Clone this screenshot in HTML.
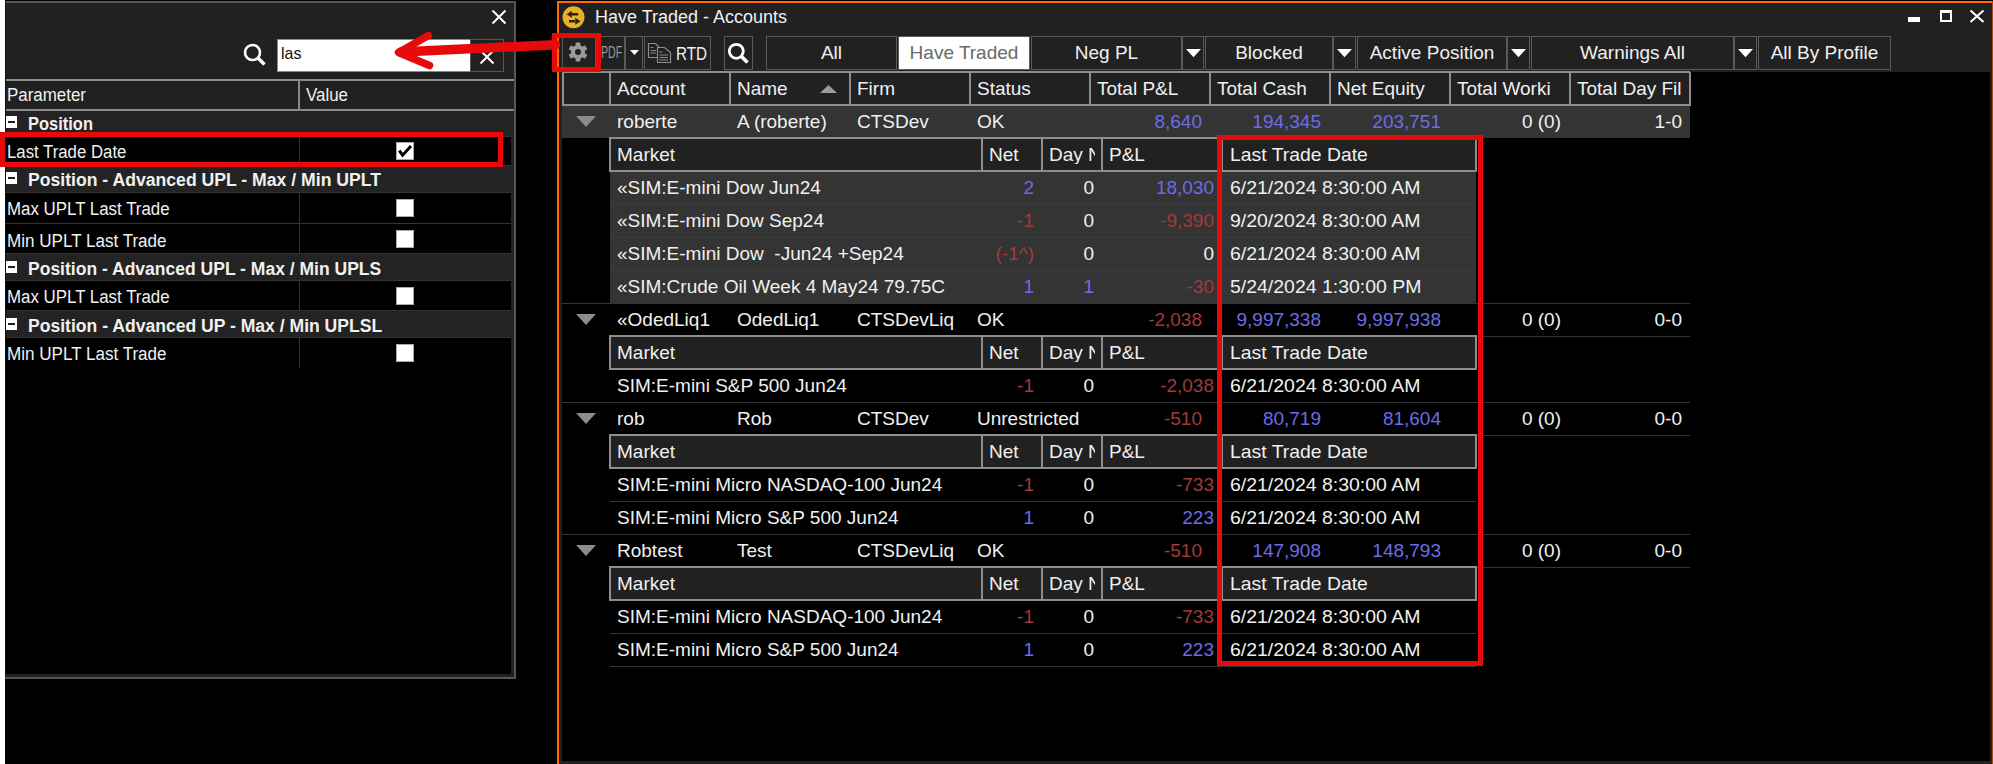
<!DOCTYPE html>
<html><head><meta charset="utf-8"><style>
html,body{margin:0;padding:0;width:1993px;height:764px;overflow:hidden;background:#000}
body{position:relative;font-family:"Liberation Sans",sans-serif}
.t{position:absolute;white-space:pre;line-height:1}
.r{position:absolute}
</style></head><body>
<div class="r" style="left:0px;top:0px;width:5px;height:764px;background:#ffffff"></div>
<div class="r" style="left:5px;top:0px;width:511px;height:679px;background:#212121"></div>
<div class="r" style="left:5px;top:0px;width:511px;height:1px;background:#000"></div>
<div class="r" style="left:6px;top:1px;width:510px;height:2px;background:#555"></div>
<div class="r" style="left:5px;top:0px;width:1px;height:679px;background:#111"></div>
<div class="r" style="left:514px;top:1px;width:2px;height:678px;background:#555"></div>
<div class="r" style="left:5px;top:677px;width:511px;height:2px;background:#555"></div>
<svg class="r" style="left:490px;top:8px" width="18" height="18" viewBox="0 0 18 18"><path d="M2.5 2.5 L15.5 15.5 M15.5 2.5 L2.5 15.5" stroke="#fff" stroke-width="2"/></svg>
<svg class="r" style="left:242px;top:42px" width="26" height="26" viewBox="0 0 26 26"><circle cx="10.5" cy="10.5" r="7.5" fill="none" stroke="#fff" stroke-width="2.6"/><path d="M16 16 L22.5 22.5" stroke="#fff" stroke-width="3.4" stroke-linecap="butt"/></svg>
<div class="r" style="left:277px;top:39px;width:194px;height:33px;background:#fff;border:1px solid #8a8a8a;box-sizing:border-box"></div>
<div class="t" style="left:281px;top:44.61px;font-size:17px;color:#111;font-weight:400;transform:scaleX(0.94);transform-origin:0 0;">las</div>
<div class="r" style="left:470px;top:39px;width:34px;height:33px;background:#212121;border:1px solid #555;box-sizing:border-box"></div>
<svg class="r" style="left:478px;top:48px" width="18" height="18" viewBox="0 0 18 18"><path d="M2.5 2.5 L15.5 15.5 M15.5 2.5 L2.5 15.5" stroke="#fff" stroke-width="2"/></svg>
<div class="r" style="left:6px;top:79px;width:508px;height:2px;background:#8a8a8a"></div>
<div class="r" style="left:6px;top:109px;width:508px;height:2px;background:#8a8a8a"></div>
<div class="r" style="left:298px;top:81px;width:2px;height:28px;background:#8a8a8a"></div>
<div class="t" style="left:6.5px;top:86.16px;font-size:18px;color:#f0f0f0;font-weight:400;transform:scaleX(0.94);transform-origin:0 0;">Parameter</div>
<div class="t" style="left:306px;top:86.16px;font-size:18px;color:#f0f0f0;font-weight:400;transform:scaleX(0.94);transform-origin:0 0;">Value</div>
<div class="r" style="left:6px;top:111px;width:508px;height:566px;background:#000"></div>
<div class="r" style="left:511px;top:111px;width:3px;height:566px;background:#212121"></div>
<div class="r" style="left:6px;top:674px;width:508px;height:3px;background:#212121"></div>
<div class="r" style="left:6px;top:111px;width:505px;height:26px;background:#232323"></div>
<div class="r" style="left:6px;top:136px;width:505px;height:1px;background:#333333"></div>
<div class="r" style="left:6px;top:115.9px;width:11px;height:12px;background:#fff"></div>
<div class="r" style="left:8px;top:120.9px;width:7px;height:2px;background:#222"></div>
<div class="t" style="left:27.5px;top:114.66px;font-size:18px;color:#f0f0f0;font-weight:700;transform:scaleX(0.9155);transform-origin:0 0;">Position</div>
<div class="r" style="left:6px;top:165px;width:505px;height:1px;background:#333333"></div>
<div class="r" style="left:299px;top:137px;width:1px;height:28px;background:#333333"></div>
<div class="t" style="left:6.5px;top:143.26px;font-size:18px;color:#f0f0f0;font-weight:400;transform:scaleX(0.9322);transform-origin:0 0;">Last Trade Date</div>
<div class="r" style="left:396px;top:142px;width:18px;height:18px;background:#fff;border:1px solid #aaa;box-sizing:border-box"></div>
<svg class="r" style="left:396px;top:142px" width="18" height="18" viewBox="0 0 18 18"><path d="M3.2 8.6 L6.6 13.2 L15 4" fill="none" stroke="#000" stroke-width="3"/></svg>
<div class="r" style="left:6px;top:166px;width:505px;height:27px;background:#232323"></div>
<div class="r" style="left:6px;top:192px;width:505px;height:1px;background:#333333"></div>
<div class="r" style="left:6px;top:172px;width:11px;height:12px;background:#fff"></div>
<div class="r" style="left:8px;top:177px;width:7px;height:2px;background:#222"></div>
<div class="t" style="left:27.5px;top:170.76px;font-size:18px;color:#f0f0f0;font-weight:700;transform:scaleX(0.9786);transform-origin:0 0;">Position - Advanced UPL - Max / Min UPLT</div>
<div class="r" style="left:6px;top:223px;width:505px;height:1px;background:#333333"></div>
<div class="r" style="left:299px;top:193px;width:1px;height:30px;background:#333333"></div>
<div class="t" style="left:6.5px;top:200.26px;font-size:18px;color:#f0f0f0;font-weight:400;transform:scaleX(0.9376);transform-origin:0 0;">Max UPLT Last Trade</div>
<div class="r" style="left:396px;top:199px;width:18px;height:18px;background:#fff;border:1px solid #aaa;box-sizing:border-box"></div>
<div class="r" style="left:6px;top:253px;width:505px;height:1px;background:#333333"></div>
<div class="r" style="left:299px;top:224px;width:1px;height:29px;background:#333333"></div>
<div class="t" style="left:6.5px;top:231.76px;font-size:18px;color:#f0f0f0;font-weight:400;transform:scaleX(0.9476);transform-origin:0 0;">Min UPLT Last Trade</div>
<div class="r" style="left:396px;top:230px;width:18px;height:18px;background:#fff;border:1px solid #aaa;box-sizing:border-box"></div>
<div class="r" style="left:6px;top:254px;width:505px;height:27px;background:#232323"></div>
<div class="r" style="left:6px;top:280px;width:505px;height:1px;background:#333333"></div>
<div class="r" style="left:6px;top:261px;width:11px;height:12px;background:#fff"></div>
<div class="r" style="left:8px;top:266px;width:7px;height:2px;background:#222"></div>
<div class="t" style="left:27.5px;top:259.76px;font-size:18px;color:#f0f0f0;font-weight:700;transform:scaleX(0.9729);transform-origin:0 0;">Position - Advanced UPL - Max / Min UPLS</div>
<div class="r" style="left:6px;top:310px;width:505px;height:1px;background:#333333"></div>
<div class="r" style="left:299px;top:281px;width:1px;height:29px;background:#333333"></div>
<div class="t" style="left:6.5px;top:288.26px;font-size:18px;color:#f0f0f0;font-weight:400;transform:scaleX(0.9376);transform-origin:0 0;">Max UPLT Last Trade</div>
<div class="r" style="left:396px;top:287px;width:18px;height:18px;background:#fff;border:1px solid #aaa;box-sizing:border-box"></div>
<div class="r" style="left:6px;top:311px;width:505px;height:27px;background:#232323"></div>
<div class="r" style="left:6px;top:337px;width:505px;height:1px;background:#333333"></div>
<div class="r" style="left:6px;top:318px;width:11px;height:12px;background:#fff"></div>
<div class="r" style="left:8px;top:323px;width:7px;height:2px;background:#222"></div>
<div class="t" style="left:27.5px;top:316.76px;font-size:18px;color:#f0f0f0;font-weight:700;transform:scaleX(0.9756);transform-origin:0 0;">Position - Advanced UP - Max / Min UPLSL</div>
<div class="r" style="left:299px;top:338px;width:1px;height:30px;background:#333333"></div>
<div class="t" style="left:6.5px;top:345.46px;font-size:18px;color:#f0f0f0;font-weight:400;transform:scaleX(0.9476);transform-origin:0 0;">Min UPLT Last Trade</div>
<div class="r" style="left:396px;top:344px;width:18px;height:18px;background:#fff;border:1px solid #aaa;box-sizing:border-box"></div>
<div class="r" style="left:557px;top:1px;width:1436px;height:763px;background:#212121"></div>
<div class="r" style="left:557px;top:1px;width:1436px;height:2px;background:#ff6a00"></div>
<div class="r" style="left:557px;top:1px;width:2px;height:763px;background:#ff6a00"></div>
<div class="r" style="left:1992px;top:1px;width:1px;height:763px;background:#a84a10"></div>
<div class="r" style="left:562px;top:72px;width:1428px;height:689px;background:#000"></div>
<svg class="r" style="left:562px;top:6px" width="23" height="23" viewBox="0 0 23 23"><circle cx="11.5" cy="11.3" r="11" fill="#e9b12b"/><path d="M4.6 8.3 L9.8 4.8 L9.8 11.8 Z M9.5 7 H16.2 V9.6 H9.5 Z" fill="#2b2412"/><path d="M18.6 15.2 L13.2 11.7 L13.2 18.7 Z M7 13.9 H13.5 V16.5 H7 Z" fill="#2b2412"/></svg>
<div class="t" style="left:595px;top:8.26px;font-size:18px;color:#f0f0f0;font-weight:400;">Have Traded - Accounts</div>
<div class="r" style="left:1908px;top:17px;width:12px;height:5px;background:#fff"></div>
<div class="r" style="left:1940px;top:10px;width:12px;height:12px;border:2px solid #fff;border-top-width:3px;box-sizing:border-box"></div>
<svg class="r" style="left:1968px;top:8px" width="18" height="16" viewBox="0 0 18 16"><path d="M2.5 2.5 L15.5 14 M15.5 2.5 L2.5 14" stroke="#fff" stroke-width="2"/></svg>
<div class="r" style="left:562px;top:36px;width:34px;height:34px;border:1px solid #5a5a5a;box-sizing:border-box;background:#212121"></div>
<svg class="r" style="left:567px;top:41px" width="22" height="22" viewBox="0 0 22 22"><g fill="#9a9a9a"><circle cx="11" cy="11" r="7"/><rect x="8.6" y="1.5" width="4.8" height="5" rx="1" transform="rotate(0 11 11)"/><rect x="8.6" y="1.5" width="4.8" height="5" rx="1" transform="rotate(60 11 11)"/><rect x="8.6" y="1.5" width="4.8" height="5" rx="1" transform="rotate(120 11 11)"/><rect x="8.6" y="1.5" width="4.8" height="5" rx="1" transform="rotate(180 11 11)"/><rect x="8.6" y="1.5" width="4.8" height="5" rx="1" transform="rotate(240 11 11)"/><rect x="8.6" y="1.5" width="4.8" height="5" rx="1" transform="rotate(300 11 11)"/></g><circle cx="11" cy="11" r="3" fill="#212121"/></svg>
<div class="r" style="left:596px;top:36px;width:29px;height:34px;border:1px solid #5a5a5a;box-sizing:border-box;background:#212121"></div>
<div class="t" style="left:601px;top:45px;font-size:16px;line-height:16px;color:#9a9a9a;transform:scaleX(0.66);transform-origin:0 0;letter-spacing:0px">PDF</div>
<div class="r" style="left:625px;top:36px;width:18px;height:34px;border:1px solid #5a5a5a;box-sizing:border-box;background:#212121"></div>
<svg class="r" style="left:630px;top:50px" width="9" height="6" viewBox="0 0 9 6"><path d="M0 0 H9 L4.5 5 Z" fill="#fff"/></svg>
<div class="r" style="left:644px;top:36px;width:67px;height:34px;border:1px solid #5a5a5a;box-sizing:border-box;background:#212121"></div>
<svg class="r" style="left:647px;top:42px" width="26" height="22" viewBox="0 0 26 22"><g fill="none" stroke="#8c8c8c" stroke-width="1.2"><path d="M1.5 1.5 H8.5 L11.5 4.5 V15.5 H1.5 Z"/><path d="M10.5 5.5 H17.5 L23.5 10.5 V20.5 H10.5 Z" fill="#212121"/><path d="M3.5 5.5 H6.5 M3.5 8.5 H9 M3.5 11 H9 M12.5 10 H15.5 M12.5 13 H21 M12.5 15.5 H21 M12.5 18 H21"/></g></svg>
<div class="t" style="left:676px;top:44px;font-size:19px;line-height:19px;color:#f0f0f0;transform:scaleX(0.8);transform-origin:0 0">RTD</div>
<div class="r" style="left:724px;top:36px;width:29px;height:34px;border:1px solid #5a5a5a;box-sizing:border-box;background:#212121"></div>
<svg class="r" style="left:726px;top:41px" width="26" height="26" viewBox="0 0 26 26"><circle cx="10.3" cy="10.3" r="7" fill="none" stroke="#fff" stroke-width="2.8"/><path d="M15.5 15.5 L21.5 21.5" stroke="#fff" stroke-width="3.6"/></svg>
<div class="r" style="left:766px;top:36px;width:131px;height:34px;border:1px solid #5a5a5a;box-sizing:border-box;background:#212121"></div>
<div class="t" style="left:531.5px;width:600px;text-align:center;top:43.42px;font-size:19px;color:#f0f0f0;font-weight:400;">All</div>
<div class="r" style="left:898px;top:36px;width:132px;height:34px;background:#fff;border:1px solid #5a5a5a;box-sizing:border-box"></div>
<div class="t" style="left:664.0px;width:600px;text-align:center;top:43.42px;font-size:19px;color:#6a6a6a;font-weight:400;">Have Traded</div>
<div class="r" style="left:1031px;top:36px;width:151px;height:34px;border:1px solid #5a5a5a;box-sizing:border-box;background:#212121"></div>
<div class="t" style="left:806.5px;width:600px;text-align:center;top:43.42px;font-size:19px;color:#f0f0f0;font-weight:400;">Neg PL</div>
<div class="r" style="left:1182px;top:36px;width:22px;height:34px;border:1px solid #5a5a5a;box-sizing:border-box;background:#212121"></div>
<svg class="r" style="left:1185.5px;top:48.8px" width="15" height="9" viewBox="0 0 15 9"><path d="M0 0 H15 L7.5 8.3 Z" fill="#fff"/></svg>
<div class="r" style="left:1205px;top:36px;width:128px;height:34px;border:1px solid #5a5a5a;box-sizing:border-box;background:#212121"></div>
<div class="t" style="left:969.0px;width:600px;text-align:center;top:43.42px;font-size:19px;color:#f0f0f0;font-weight:400;">Blocked</div>
<div class="r" style="left:1333px;top:36px;width:23px;height:34px;border:1px solid #5a5a5a;box-sizing:border-box;background:#212121"></div>
<svg class="r" style="left:1337.0px;top:48.8px" width="15" height="9" viewBox="0 0 15 9"><path d="M0 0 H15 L7.5 8.3 Z" fill="#fff"/></svg>
<div class="r" style="left:1357px;top:36px;width:150px;height:34px;border:1px solid #5a5a5a;box-sizing:border-box;background:#212121"></div>
<div class="t" style="left:1132.0px;width:600px;text-align:center;top:43.42px;font-size:19px;color:#f0f0f0;font-weight:400;">Active Position</div>
<div class="r" style="left:1507px;top:36px;width:23px;height:34px;border:1px solid #5a5a5a;box-sizing:border-box;background:#212121"></div>
<svg class="r" style="left:1511.0px;top:48.8px" width="15" height="9" viewBox="0 0 15 9"><path d="M0 0 H15 L7.5 8.3 Z" fill="#fff"/></svg>
<div class="r" style="left:1531px;top:36px;width:203px;height:34px;border:1px solid #5a5a5a;box-sizing:border-box;background:#212121"></div>
<div class="t" style="left:1332.5px;width:600px;text-align:center;top:43.42px;font-size:19px;color:#f0f0f0;font-weight:400;">Warnings All</div>
<div class="r" style="left:1734px;top:36px;width:23px;height:34px;border:1px solid #5a5a5a;box-sizing:border-box;background:#212121"></div>
<svg class="r" style="left:1738.0px;top:48.8px" width="15" height="9" viewBox="0 0 15 9"><path d="M0 0 H15 L7.5 8.3 Z" fill="#fff"/></svg>
<div class="r" style="left:1758px;top:36px;width:133px;height:34px;border:1px solid #5a5a5a;box-sizing:border-box;background:#212121"></div>
<div class="t" style="left:1524.5px;width:600px;text-align:center;top:43.42px;font-size:19px;color:#f0f0f0;font-weight:400;">All By Profile</div>
<div class="r" style="left:562px;top:72px;width:1128px;height:33px;background:#212121"></div>
<div class="r" style="left:562px;top:71px;width:1128px;height:2px;background:#8e8e8e"></div>
<div class="r" style="left:562px;top:104px;width:1128px;height:2px;background:#8e8e8e"></div>
<div class="r" style="left:562px;top:72px;width:2px;height:34px;background:#8e8e8e"></div>
<div class="r" style="left:609px;top:72px;width:2px;height:34px;background:#8e8e8e"></div>
<div class="r" style="left:729px;top:72px;width:2px;height:34px;background:#8e8e8e"></div>
<div class="r" style="left:849px;top:72px;width:2px;height:34px;background:#8e8e8e"></div>
<div class="r" style="left:969px;top:72px;width:2px;height:34px;background:#8e8e8e"></div>
<div class="r" style="left:1089px;top:72px;width:2px;height:34px;background:#8e8e8e"></div>
<div class="r" style="left:1209px;top:72px;width:2px;height:34px;background:#8e8e8e"></div>
<div class="r" style="left:1329px;top:72px;width:2px;height:34px;background:#8e8e8e"></div>
<div class="r" style="left:1449px;top:72px;width:2px;height:34px;background:#8e8e8e"></div>
<div class="r" style="left:1569px;top:72px;width:2px;height:34px;background:#8e8e8e"></div>
<div class="r" style="left:1689px;top:72px;width:2px;height:34px;background:#8e8e8e"></div>
<div class="t" style="left:617px;top:79.42px;font-size:19px;color:#f0f0f0;font-weight:400;">Account</div>
<div class="t" style="left:737px;top:79.42px;font-size:19px;color:#f0f0f0;font-weight:400;">Name</div>
<div class="t" style="left:857px;top:79.42px;font-size:19px;color:#f0f0f0;font-weight:400;">Firm</div>
<div class="t" style="left:977px;top:79.42px;font-size:19px;color:#f0f0f0;font-weight:400;">Status</div>
<div class="t" style="left:1097px;top:79.42px;font-size:19px;color:#f0f0f0;font-weight:400;">Total P&amp;L</div>
<div class="t" style="left:1217px;top:79.42px;font-size:19px;color:#f0f0f0;font-weight:400;">Total Cash</div>
<div class="t" style="left:1337px;top:79.42px;font-size:19px;color:#f0f0f0;font-weight:400;">Net Equity</div>
<div class="t" style="left:1457px;top:79.42px;font-size:19px;color:#f0f0f0;font-weight:400;">Total Worki</div>
<div class="t" style="left:1577px;top:79.42px;font-size:19px;color:#f0f0f0;font-weight:400;">Total Day Fil</div>
<svg class="r" style="left:820px;top:85px" width="17" height="8" viewBox="0 0 17 8"><path d="M0 8 L8.5 0 L17 8 Z" fill="#9a9a9a"/></svg>
<div class="r" style="left:562px;top:106px;width:1128px;height:32px;background:#343434"></div>
<svg class="r" style="left:576px;top:116px" width="20" height="11" viewBox="0 0 20 11"><path d="M0 0 H20 L10 11 Z" fill="#8c8c8c"/></svg>
<div class="t" style="left:617px;top:112.42px;font-size:19px;color:#f0f0f0;font-weight:400;">roberte</div>
<div class="t" style="left:737px;top:112.42px;font-size:19px;color:#f0f0f0;font-weight:400;">A (roberte)</div>
<div class="t" style="left:857px;top:112.42px;font-size:19px;color:#f0f0f0;font-weight:400;">CTSDev</div>
<div class="t" style="left:977px;top:112.42px;font-size:19px;color:#f0f0f0;font-weight:400;">OK</div>
<div class="t" style="right:791px;top:112.42px;font-size:19px;color:#6c6ce4;font-weight:400;">8,640</div>
<div class="t" style="right:672px;top:112.42px;font-size:19px;color:#6c6ce4;font-weight:400;">194,345</div>
<div class="t" style="right:552px;top:112.42px;font-size:19px;color:#6c6ce4;font-weight:400;">203,751</div>
<div class="t" style="right:432px;top:112.42px;font-size:19px;color:#f0f0f0;font-weight:400;">0 (0)</div>
<div class="t" style="right:311px;top:112.42px;font-size:19px;color:#f0f0f0;font-weight:400;">1-0</div>
<div class="r" style="left:610px;top:138px;width:866px;height:34px;background:#212121"></div>
<div class="r" style="left:609px;top:137px;width:868px;height:2px;background:#8e8e8e"></div>
<div class="r" style="left:609px;top:170px;width:868px;height:2px;background:#8e8e8e"></div>
<div class="r" style="left:609px;top:137px;width:2px;height:35px;background:#8e8e8e"></div>
<div class="r" style="left:981px;top:137px;width:2px;height:35px;background:#8e8e8e"></div>
<div class="r" style="left:1041px;top:137px;width:2px;height:35px;background:#8e8e8e"></div>
<div class="r" style="left:1101px;top:137px;width:2px;height:35px;background:#8e8e8e"></div>
<div class="r" style="left:1221px;top:137px;width:2px;height:35px;background:#8e8e8e"></div>
<div class="r" style="left:1475px;top:137px;width:2px;height:35px;background:#8e8e8e"></div>
<div class="t" style="left:617px;top:145.42px;font-size:19px;color:#f0f0f0;font-weight:400;">Market</div>
<div class="t" style="left:989px;top:145.42px;font-size:19px;color:#f0f0f0;font-weight:400;">Net</div>
<div class="t" style="left:1049px;top:145.42px;width:46px;overflow:hidden;font-size:19px;color:#f0f0f0">Day N</div>
<div class="t" style="left:1109px;top:145.42px;font-size:19px;color:#f0f0f0;font-weight:400;">P&amp;L</div>
<div class="t" style="left:1229.5px;top:145.42px;font-size:19px;color:#f0f0f0;font-weight:400;transform:scaleX(1.02);transform-origin:0 0;">Last Trade Date</div>
<div class="r" style="left:610px;top:172px;width:866px;height:32px;background:#343434"></div>
<div class="t" style="left:617px;top:178.42px;font-size:19px;color:#f0f0f0;font-weight:400;">«SIM:E-mini Dow Jun24</div>
<div class="t" style="right:959px;top:178.42px;font-size:19px;color:#6c6ce4;font-weight:400;">2</div>
<div class="t" style="right:899px;top:178.42px;font-size:19px;color:#f0f0f0;font-weight:400;">0</div>
<div class="t" style="right:779px;top:178.42px;font-size:19px;color:#6c6ce4;font-weight:400;">18,030</div>
<div class="t" style="left:1229.5px;top:178.42px;font-size:19px;color:#f0f0f0;font-weight:400;transform:scaleX(1.024);transform-origin:0 0;">6/21/2024 8:30:00 AM</div>
<div class="r" style="left:610px;top:204px;width:866px;height:33px;background:#343434"></div>
<div class="r" style="left:610px;top:204px;width:866px;height:1px;background:#3b3b3b"></div>
<div class="t" style="left:617px;top:211.42px;font-size:19px;color:#f0f0f0;font-weight:400;">«SIM:E-mini Dow Sep24</div>
<div class="t" style="right:959px;top:211.42px;font-size:19px;color:#a23a3a;font-weight:400;">-1</div>
<div class="t" style="right:899px;top:211.42px;font-size:19px;color:#f0f0f0;font-weight:400;">0</div>
<div class="t" style="right:779px;top:211.42px;font-size:19px;color:#a23a3a;font-weight:400;">-9,390</div>
<div class="t" style="left:1229.5px;top:211.42px;font-size:19px;color:#f0f0f0;font-weight:400;transform:scaleX(1.024);transform-origin:0 0;">9/20/2024 8:30:00 AM</div>
<div class="r" style="left:610px;top:237px;width:866px;height:33px;background:#343434"></div>
<div class="r" style="left:610px;top:237px;width:866px;height:1px;background:#3b3b3b"></div>
<div class="t" style="left:617px;top:244.42px;font-size:19px;color:#f0f0f0;font-weight:400;">«SIM:E-mini Dow&nbsp; -Jun24 +Sep24</div>
<div class="t" style="right:959px;top:244.42px;font-size:19px;color:#a23a3a;font-weight:400;">(-1^)</div>
<div class="t" style="right:899px;top:244.42px;font-size:19px;color:#f0f0f0;font-weight:400;">0</div>
<div class="t" style="right:779px;top:244.42px;font-size:19px;color:#f0f0f0;font-weight:400;">0</div>
<div class="t" style="left:1229.5px;top:244.42px;font-size:19px;color:#f0f0f0;font-weight:400;transform:scaleX(1.024);transform-origin:0 0;">6/21/2024 8:30:00 AM</div>
<div class="r" style="left:610px;top:270px;width:866px;height:33px;background:#343434"></div>
<div class="r" style="left:610px;top:270px;width:866px;height:1px;background:#3b3b3b"></div>
<div class="t" style="left:617px;top:277.42px;font-size:19px;color:#f0f0f0;font-weight:400;">«SIM:Crude Oil Week 4 May24 79.75C</div>
<div class="t" style="right:959px;top:277.42px;font-size:19px;color:#6c6ce4;font-weight:400;">1</div>
<div class="t" style="right:899px;top:277.42px;font-size:19px;color:#6c6ce4;font-weight:400;">1</div>
<div class="t" style="right:779px;top:277.42px;font-size:19px;color:#a23a3a;font-weight:400;">-30</div>
<div class="t" style="left:1229.5px;top:277.42px;font-size:19px;color:#f0f0f0;font-weight:400;transform:scaleX(1.024);transform-origin:0 0;">5/24/2024 1:30:00 PM</div>
<div class="r" style="left:562px;top:303px;width:1128px;height:1px;background:#333333"></div>
<svg class="r" style="left:576px;top:314px" width="20" height="11" viewBox="0 0 20 11"><path d="M0 0 H20 L10 11 Z" fill="#8c8c8c"/></svg>
<div class="t" style="left:617px;top:310.42px;font-size:19px;color:#f0f0f0;font-weight:400;">«OdedLiq1</div>
<div class="t" style="left:737px;top:310.42px;font-size:19px;color:#f0f0f0;font-weight:400;">OdedLiq1</div>
<div class="t" style="left:857px;top:310.42px;font-size:19px;color:#f0f0f0;font-weight:400;">CTSDevLiq</div>
<div class="t" style="left:977px;top:310.42px;font-size:19px;color:#f0f0f0;font-weight:400;">OK</div>
<div class="t" style="right:791px;top:310.42px;font-size:19px;color:#a23a3a;font-weight:400;">-2,038</div>
<div class="t" style="right:672px;top:310.42px;font-size:19px;color:#6c6ce4;font-weight:400;">9,997,338</div>
<div class="t" style="right:552px;top:310.42px;font-size:19px;color:#6c6ce4;font-weight:400;">9,997,938</div>
<div class="t" style="right:432px;top:310.42px;font-size:19px;color:#f0f0f0;font-weight:400;">0 (0)</div>
<div class="t" style="right:311px;top:310.42px;font-size:19px;color:#f0f0f0;font-weight:400;">0-0</div>
<div class="r" style="left:1476px;top:336px;width:214px;height:1px;background:#333333"></div>
<div class="r" style="left:610px;top:336px;width:866px;height:34px;background:#212121"></div>
<div class="r" style="left:609px;top:335px;width:868px;height:2px;background:#8e8e8e"></div>
<div class="r" style="left:609px;top:368px;width:868px;height:2px;background:#8e8e8e"></div>
<div class="r" style="left:609px;top:335px;width:2px;height:35px;background:#8e8e8e"></div>
<div class="r" style="left:981px;top:335px;width:2px;height:35px;background:#8e8e8e"></div>
<div class="r" style="left:1041px;top:335px;width:2px;height:35px;background:#8e8e8e"></div>
<div class="r" style="left:1101px;top:335px;width:2px;height:35px;background:#8e8e8e"></div>
<div class="r" style="left:1221px;top:335px;width:2px;height:35px;background:#8e8e8e"></div>
<div class="r" style="left:1475px;top:335px;width:2px;height:35px;background:#8e8e8e"></div>
<div class="t" style="left:617px;top:343.42px;font-size:19px;color:#f0f0f0;font-weight:400;">Market</div>
<div class="t" style="left:989px;top:343.42px;font-size:19px;color:#f0f0f0;font-weight:400;">Net</div>
<div class="t" style="left:1049px;top:343.42px;width:46px;overflow:hidden;font-size:19px;color:#f0f0f0">Day N</div>
<div class="t" style="left:1109px;top:343.42px;font-size:19px;color:#f0f0f0;font-weight:400;">P&amp;L</div>
<div class="t" style="left:1229.5px;top:343.42px;font-size:19px;color:#f0f0f0;font-weight:400;transform:scaleX(1.02);transform-origin:0 0;">Last Trade Date</div>
<div class="t" style="left:617px;top:376.42px;font-size:19px;color:#f0f0f0;font-weight:400;">SIM:E-mini S&amp;P 500 Jun24</div>
<div class="t" style="right:959px;top:376.42px;font-size:19px;color:#a23a3a;font-weight:400;">-1</div>
<div class="t" style="right:899px;top:376.42px;font-size:19px;color:#f0f0f0;font-weight:400;">0</div>
<div class="t" style="right:779px;top:376.42px;font-size:19px;color:#a23a3a;font-weight:400;">-2,038</div>
<div class="t" style="left:1229.5px;top:376.42px;font-size:19px;color:#f0f0f0;font-weight:400;transform:scaleX(1.024);transform-origin:0 0;">6/21/2024 8:30:00 AM</div>
<div class="r" style="left:562px;top:402px;width:1128px;height:1px;background:#333333"></div>
<svg class="r" style="left:576px;top:413px" width="20" height="11" viewBox="0 0 20 11"><path d="M0 0 H20 L10 11 Z" fill="#8c8c8c"/></svg>
<div class="t" style="left:617px;top:409.42px;font-size:19px;color:#f0f0f0;font-weight:400;">rob</div>
<div class="t" style="left:737px;top:409.42px;font-size:19px;color:#f0f0f0;font-weight:400;">Rob</div>
<div class="t" style="left:857px;top:409.42px;font-size:19px;color:#f0f0f0;font-weight:400;">CTSDev</div>
<div class="t" style="left:977px;top:409.42px;font-size:19px;color:#f0f0f0;font-weight:400;">Unrestricted</div>
<div class="t" style="right:791px;top:409.42px;font-size:19px;color:#a23a3a;font-weight:400;">-510</div>
<div class="t" style="right:672px;top:409.42px;font-size:19px;color:#6c6ce4;font-weight:400;">80,719</div>
<div class="t" style="right:552px;top:409.42px;font-size:19px;color:#6c6ce4;font-weight:400;">81,604</div>
<div class="t" style="right:432px;top:409.42px;font-size:19px;color:#f0f0f0;font-weight:400;">0 (0)</div>
<div class="t" style="right:311px;top:409.42px;font-size:19px;color:#f0f0f0;font-weight:400;">0-0</div>
<div class="r" style="left:1476px;top:435px;width:214px;height:1px;background:#333333"></div>
<div class="r" style="left:610px;top:435px;width:866px;height:34px;background:#212121"></div>
<div class="r" style="left:609px;top:434px;width:868px;height:2px;background:#8e8e8e"></div>
<div class="r" style="left:609px;top:467px;width:868px;height:2px;background:#8e8e8e"></div>
<div class="r" style="left:609px;top:434px;width:2px;height:35px;background:#8e8e8e"></div>
<div class="r" style="left:981px;top:434px;width:2px;height:35px;background:#8e8e8e"></div>
<div class="r" style="left:1041px;top:434px;width:2px;height:35px;background:#8e8e8e"></div>
<div class="r" style="left:1101px;top:434px;width:2px;height:35px;background:#8e8e8e"></div>
<div class="r" style="left:1221px;top:434px;width:2px;height:35px;background:#8e8e8e"></div>
<div class="r" style="left:1475px;top:434px;width:2px;height:35px;background:#8e8e8e"></div>
<div class="t" style="left:617px;top:442.42px;font-size:19px;color:#f0f0f0;font-weight:400;">Market</div>
<div class="t" style="left:989px;top:442.42px;font-size:19px;color:#f0f0f0;font-weight:400;">Net</div>
<div class="t" style="left:1049px;top:442.42px;width:46px;overflow:hidden;font-size:19px;color:#f0f0f0">Day N</div>
<div class="t" style="left:1109px;top:442.42px;font-size:19px;color:#f0f0f0;font-weight:400;">P&amp;L</div>
<div class="t" style="left:1229.5px;top:442.42px;font-size:19px;color:#f0f0f0;font-weight:400;transform:scaleX(1.02);transform-origin:0 0;">Last Trade Date</div>
<div class="t" style="left:617px;top:475.42px;font-size:19px;color:#f0f0f0;font-weight:400;">SIM:E-mini Micro NASDAQ-100 Jun24</div>
<div class="t" style="right:959px;top:475.42px;font-size:19px;color:#a23a3a;font-weight:400;">-1</div>
<div class="t" style="right:899px;top:475.42px;font-size:19px;color:#f0f0f0;font-weight:400;">0</div>
<div class="t" style="right:779px;top:475.42px;font-size:19px;color:#a23a3a;font-weight:400;">-733</div>
<div class="t" style="left:1229.5px;top:475.42px;font-size:19px;color:#f0f0f0;font-weight:400;transform:scaleX(1.024);transform-origin:0 0;">6/21/2024 8:30:00 AM</div>
<div class="r" style="left:610px;top:501px;width:866px;height:1px;background:#333333"></div>
<div class="t" style="left:617px;top:508.42px;font-size:19px;color:#f0f0f0;font-weight:400;">SIM:E-mini Micro S&amp;P 500 Jun24</div>
<div class="t" style="right:959px;top:508.42px;font-size:19px;color:#6c6ce4;font-weight:400;">1</div>
<div class="t" style="right:899px;top:508.42px;font-size:19px;color:#f0f0f0;font-weight:400;">0</div>
<div class="t" style="right:779px;top:508.42px;font-size:19px;color:#6c6ce4;font-weight:400;">223</div>
<div class="t" style="left:1229.5px;top:508.42px;font-size:19px;color:#f0f0f0;font-weight:400;transform:scaleX(1.024);transform-origin:0 0;">6/21/2024 8:30:00 AM</div>
<div class="r" style="left:562px;top:534px;width:1128px;height:1px;background:#333333"></div>
<svg class="r" style="left:576px;top:545px" width="20" height="11" viewBox="0 0 20 11"><path d="M0 0 H20 L10 11 Z" fill="#8c8c8c"/></svg>
<div class="t" style="left:617px;top:541.42px;font-size:19px;color:#f0f0f0;font-weight:400;">Robtest</div>
<div class="t" style="left:737px;top:541.42px;font-size:19px;color:#f0f0f0;font-weight:400;">Test</div>
<div class="t" style="left:857px;top:541.42px;font-size:19px;color:#f0f0f0;font-weight:400;">CTSDevLiq</div>
<div class="t" style="left:977px;top:541.42px;font-size:19px;color:#f0f0f0;font-weight:400;">OK</div>
<div class="t" style="right:791px;top:541.42px;font-size:19px;color:#a23a3a;font-weight:400;">-510</div>
<div class="t" style="right:672px;top:541.42px;font-size:19px;color:#6c6ce4;font-weight:400;">147,908</div>
<div class="t" style="right:552px;top:541.42px;font-size:19px;color:#6c6ce4;font-weight:400;">148,793</div>
<div class="t" style="right:432px;top:541.42px;font-size:19px;color:#f0f0f0;font-weight:400;">0 (0)</div>
<div class="t" style="right:311px;top:541.42px;font-size:19px;color:#f0f0f0;font-weight:400;">0-0</div>
<div class="r" style="left:1476px;top:567px;width:214px;height:1px;background:#333333"></div>
<div class="r" style="left:610px;top:567px;width:866px;height:34px;background:#212121"></div>
<div class="r" style="left:609px;top:566px;width:868px;height:2px;background:#8e8e8e"></div>
<div class="r" style="left:609px;top:599px;width:868px;height:2px;background:#8e8e8e"></div>
<div class="r" style="left:609px;top:566px;width:2px;height:35px;background:#8e8e8e"></div>
<div class="r" style="left:981px;top:566px;width:2px;height:35px;background:#8e8e8e"></div>
<div class="r" style="left:1041px;top:566px;width:2px;height:35px;background:#8e8e8e"></div>
<div class="r" style="left:1101px;top:566px;width:2px;height:35px;background:#8e8e8e"></div>
<div class="r" style="left:1221px;top:566px;width:2px;height:35px;background:#8e8e8e"></div>
<div class="r" style="left:1475px;top:566px;width:2px;height:35px;background:#8e8e8e"></div>
<div class="t" style="left:617px;top:574.42px;font-size:19px;color:#f0f0f0;font-weight:400;">Market</div>
<div class="t" style="left:989px;top:574.42px;font-size:19px;color:#f0f0f0;font-weight:400;">Net</div>
<div class="t" style="left:1049px;top:574.42px;width:46px;overflow:hidden;font-size:19px;color:#f0f0f0">Day N</div>
<div class="t" style="left:1109px;top:574.42px;font-size:19px;color:#f0f0f0;font-weight:400;">P&amp;L</div>
<div class="t" style="left:1229.5px;top:574.42px;font-size:19px;color:#f0f0f0;font-weight:400;transform:scaleX(1.02);transform-origin:0 0;">Last Trade Date</div>
<div class="t" style="left:617px;top:607.42px;font-size:19px;color:#f0f0f0;font-weight:400;">SIM:E-mini Micro NASDAQ-100 Jun24</div>
<div class="t" style="right:959px;top:607.42px;font-size:19px;color:#a23a3a;font-weight:400;">-1</div>
<div class="t" style="right:899px;top:607.42px;font-size:19px;color:#f0f0f0;font-weight:400;">0</div>
<div class="t" style="right:779px;top:607.42px;font-size:19px;color:#a23a3a;font-weight:400;">-733</div>
<div class="t" style="left:1229.5px;top:607.42px;font-size:19px;color:#f0f0f0;font-weight:400;transform:scaleX(1.024);transform-origin:0 0;">6/21/2024 8:30:00 AM</div>
<div class="r" style="left:610px;top:633px;width:866px;height:1px;background:#333333"></div>
<div class="t" style="left:617px;top:640.42px;font-size:19px;color:#f0f0f0;font-weight:400;">SIM:E-mini Micro S&amp;P 500 Jun24</div>
<div class="t" style="right:959px;top:640.42px;font-size:19px;color:#6c6ce4;font-weight:400;">1</div>
<div class="t" style="right:899px;top:640.42px;font-size:19px;color:#f0f0f0;font-weight:400;">0</div>
<div class="t" style="right:779px;top:640.42px;font-size:19px;color:#6c6ce4;font-weight:400;">223</div>
<div class="t" style="left:1229.5px;top:640.42px;font-size:19px;color:#f0f0f0;font-weight:400;transform:scaleX(1.024);transform-origin:0 0;">6/21/2024 8:30:00 AM</div>
<div class="r" style="left:610px;top:666px;width:866px;height:1px;background:#333333"></div>
<div class="r" style="left:1217px;top:135px;width:266px;height:531px;border:5px solid #e60a0a;box-sizing:border-box"></div>
<div class="r" style="left:552px;top:33px;width:49px;height:39px;border:5px solid #e60a0a;box-sizing:border-box"></div>
<div class="r" style="left:0px;top:132px;width:503px;height:35px;border:5px solid #e60a0a;box-sizing:border-box"></div>
<svg class="r" style="left:0;top:0" width="1993" height="764" viewBox="0 0 1993 764"><path d="M401 52 L555.5 44.7" stroke="#e60a0a" stroke-width="9.5" stroke-linecap="round"/><path d="M428.5 35.5 L398.5 52.5 L429.5 65.5" fill="none" stroke="#e60a0a" stroke-width="7.5" stroke-linecap="round" stroke-linejoin="round"/></svg>
</body></html>
